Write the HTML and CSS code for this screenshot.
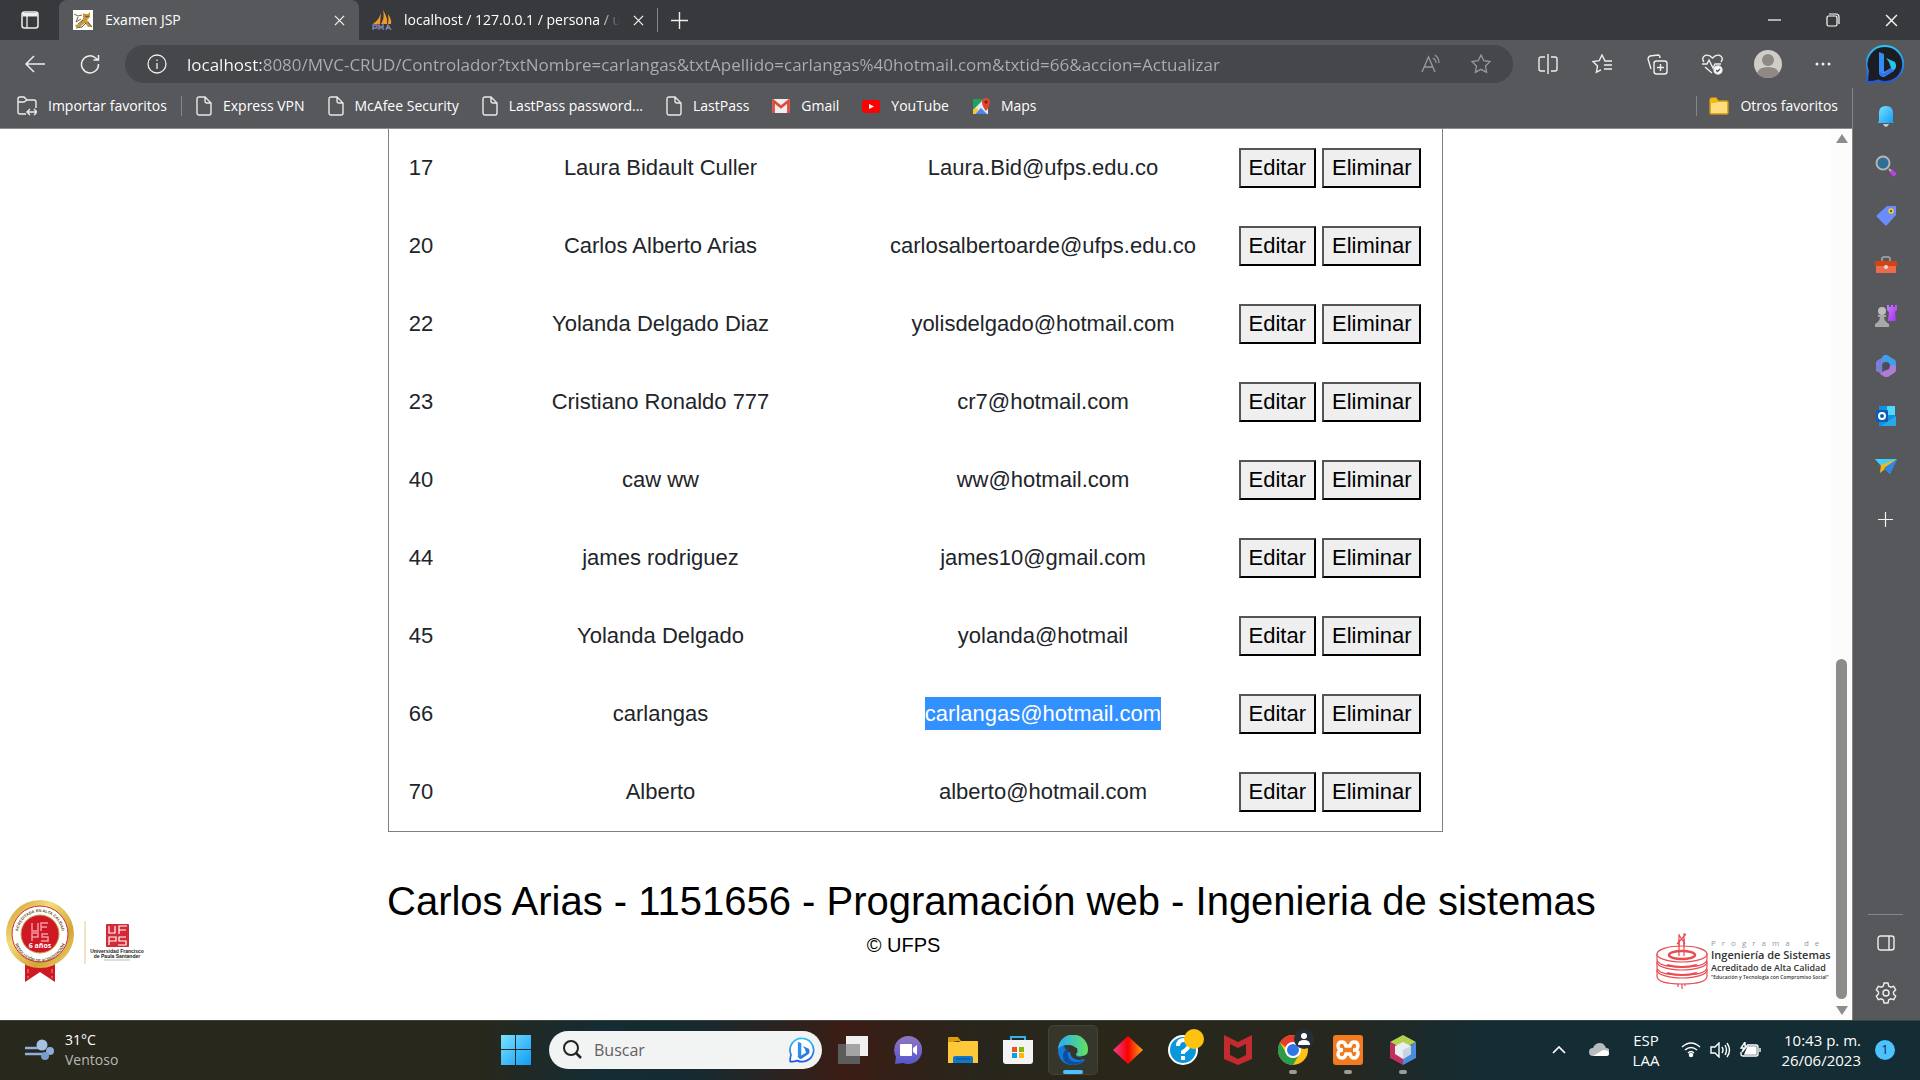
FILE: index.html
```html
<!DOCTYPE html>
<html lang="es">
<head>
<meta charset="utf-8">
<title>Examen JSP</title>
<link rel="stylesheet" href="styles.css">
</head>
<body>
<svg class="defs" aria-hidden="true">
  <defs>
    <linearGradient id="bing" x1="0" y1="0" x2="0" y2="1"><stop offset="0" stop-color="#2ac4f5"/><stop offset="1" stop-color="#2456e0"/></linearGradient>
    <linearGradient id="violet" x1="0" y1="0" x2="1" y2="1"><stop offset="0" stop-color="#c77dff"/><stop offset="1" stop-color="#a92cf0"/></linearGradient>
    <linearGradient id="gold" x1="0" y1="0" x2="1" y2="1"><stop offset="0" stop-color="#c8952a"/><stop offset=".35" stop-color="#f3dc7a"/><stop offset=".7" stop-color="#d3a536"/><stop offset="1" stop-color="#f0d878"/></linearGradient>
    <linearGradient id="sky" x1="0" y1="0" x2="1" y2="1"><stop offset="0" stop-color="#7be3ff"/><stop offset="1" stop-color="#0f9cf5"/></linearGradient>
    <symbol id="page" viewBox="0 0 16 20"><path d="M3 1h6l6 6v10a2 2 0 0 1-2 2H3a2 2 0 0 1-2-2V3a2 2 0 0 1 2-2zM9 1v4a2 2 0 0 0 2 2h4" fill="none" stroke="#e8e8e8" stroke-width="1.4"/></symbol>
    <symbol id="cross" viewBox="0 0 12 12"><path d="M1 1l10 10M11 1L1 11" stroke="#f0f0f0" stroke-width="1.4"/></symbol>
    <symbol id="plus" viewBox="0 0 16 16"><path d="M8 0v16M0 8h16" stroke="#f0f0f0" stroke-width="1.3"/></symbol>
  </defs>
</svg>

<header class="tabs">
  <button class="icon-btn tab-menu" aria-label="Menú de pestañas"><svg width="18" height="18" viewBox="0 0 18 18"><rect x="1" y="1" width="16" height="16" rx="2.5" fill="none" stroke="#eee" stroke-width="1.5"/><path d="M1.500 2h15v3.500h-15z" fill="#eee"/><path d="M6 5v12" stroke="#eee" stroke-width="1.300"/></svg></button>
  <div class="tab active">
    <svg width="20" height="20" viewBox="0 0 20 20"><rect width="20" height="20" fill="#fff"/><path d="M10 3l2 1h3l2-2v5l-3 3 3 4 2 3h-4l-3-4-5 4H3l-1-2 4-1 4-5z" fill="#c99a3c"/><path d="M1 4l4 2 4-1M5 7l-2 5 5-3M5 14l5-4M3 18l6-1 4-4M12 6l2 1 2-1M15 12l4 5" stroke="#4a3a1c" stroke-width=".8" fill="none"/></svg>
    <span class="tab-title">Examen JSP</span>
    <button class="icon-btn small" aria-label="Cerrar"><svg width="11" height="11"><use href="#cross"/></svg></button>
  </div>
  <div class="tab">
    <svg width="20" height="20" viewBox="0 0 20 20"><path d="M9 1q0 7-8 13h7zM11 0q5 8 4 14H9q4-6 2-14zM16 4q4 6 3 10h-3q1-5 0-10z" fill="#f59a23"/><path d="M1 20v-5h4v3H1M7 20v-5l2 3 2-3v5M14 20l2-5 3 5M14 18h4" stroke="#8583bb" stroke-width="1.300" fill="none"/></svg>
    <span class="tab-title faded">localhost / 127.0.0.1 / persona / u</span>
    <button class="icon-btn small" aria-label="Cerrar"><svg width="11" height="11"><use href="#cross"/></svg></button>
  </div>
  <span class="rule"></span>
  <button class="icon-btn new-tab" aria-label="Nueva pestaña"><svg width="17" height="17"><use href="#plus"/></svg></button>
  <div class="window-buttons">
    <button class="icon-btn" aria-label="Minimizar"><svg width="14" height="14"><path d="M0 7h13" stroke="#fff" stroke-width="1.200"/></svg></button>
    <button class="icon-btn" aria-label="Restaurar"><svg width="14" height="14" fill="none" stroke="#fff" stroke-width="1.200"><rect x="1" y="3" width="10" height="10" rx="1.500"/><path d="M3 1h7q3 0 3 3v7"/></svg></button>
    <button class="icon-btn" aria-label="Cerrar ventana"><svg width="13" height="13"><use href="#cross"/></svg></button>
  </div>
</header>

<div class="toolbar">
  <button class="icon-btn nav" aria-label="Atrás"><svg width="20" height="18" fill="none" stroke="#eee" stroke-width="1.500"><path d="M9 1L1 9l8 8M1 9h19"/></svg></button>
  <button class="icon-btn nav" aria-label="Actualizar"><svg width="20" height="20" fill="none" stroke="#eee" stroke-width="1.500"><path d="M18.500 10A8.500 8.500 0 1 1 15 3.500l3 2.500M18.500 1v5h-5"/></svg></button>
  <div class="address">
    <svg width="20" height="20" fill="none" stroke="#eee" stroke-width="1.300"><circle cx="10" cy="10" r="9"/><path d="M10 9v6M10 5.500v1.500"/></svg>
    <input class="url" type="text" aria-label="Dirección" value="localhost:8080/MVC-CRUD/Controlador?txtNombre=carlangas&amp;txtApellido=carlangas%40hotmail.com&amp;txtid=66&amp;accion=Actualizar">
    <button class="icon-btn" aria-label="Leer en voz alta"><svg width="22" height="20" fill="none" stroke="#98999c" stroke-width="1.300"><path d="M2 18L8.500 3 15 18M4.500 13h8M13 4q3 2 3 5M15 1q4 3 4 8"/></svg></button>
    <button class="icon-btn" aria-label="Agregar a favoritos"><svg width="20" height="20" fill="none" stroke="#98999c" stroke-width="1.300"><path d="M10 1l2.800 5.700 6.200.900-4.500 4.400 1.100 6.200L10 15.300l-5.600 2.900 1.100-6.200L1 7.600l6.200-.9z"/></svg></button>
  </div>
  <div class="actions">
    <button class="icon-btn" aria-label="Dividir pantalla"><svg width="20" height="20" fill="none" stroke="#eee" stroke-width="1.400"><path d="M7 3H3Q1 3 1 5v10q0 2 2 2h4M13 3h4q2 0 2 2v10q0 2-2 2h-4M10 0v20"/></svg></button>
    <button class="icon-btn" aria-label="Favoritos"><svg width="21" height="20" fill="none" stroke="#eee" stroke-width="1.400"><path d="M20 7h-7L10 1 7.200 6.700 1 7.600 5.500 12l-1.100 6.200L9 15.800M12 11h8M12 15h8"/></svg></button>
    <button class="icon-btn" aria-label="Colecciones"><svg width="21" height="21" fill="none" stroke="#eee" stroke-width="1.400"><path d="M4 15L1 5q0-2 2-3l8-1q2 0 2 3"/><rect x="7" y="7" width="13" height="13" rx="2.500"/><path d="M13.500 10v7M10 13.500h7"/></svg></button>
    <button class="icon-btn" aria-label="Rendimiento"><svg width="21" height="21" fill="none" stroke="#eee" stroke-width="1.400"><path d="M2 8Q-1 4 3 1.500 7 0 10.500 4 14 0 18 1.500q4 2.500 1 6.500M3 13l7 6M0 10h5l2-4 4 8 2-4h6"/><circle cx="16" cy="16" r="4" fill="#fff"/><path d="M14 16l1.500 1.500L18 15" stroke="#55565a"/></svg></button>
    <button class="icon-btn" aria-label="Perfil"><svg width="28" height="28"><circle cx="14" cy="14" r="14" fill="#d0cdc9"/><circle cx="14" cy="10" r="6" fill="#8e8984"/><path d="M3 23Q5 17 14 17t11 6q-4 5-11 5T3 23z" fill="#8e8984"/></svg></button>
    <button class="icon-btn" aria-label="Configuración y más"><svg width="18" height="4" fill="#eee"><circle cx="3" cy="2" r="1.500"/><circle cx="9" cy="2" r="1.500"/><circle cx="15" cy="2" r="1.500"/></svg></button>
    <button class="icon-btn" aria-label="Bing"><svg width="38" height="38" viewBox="0 0 38 38"><path d="M19 1a18 18 0 1 1-7 34.500q-5 2-10.500 1.500Q1 32 2 26A18 18 0 0 1 19 1z" fill="#1c1d22" stroke="url(#bing)" stroke-width="2"/><path d="M13 7l5 2v18l-3 4-2-3z" fill="#2f8df5"/><path d="M18 27l7-4-2-6-3-4 9 4q3 6-2 9l-9 6q-4 0-5-4z" fill="#25c3ee"/><path d="M15 31q-2-2-2-4l5 1 7-5 3 3-10 6z" fill="#3a6cf4"/></svg></button>
  </div>
</div>

<div class="middle">
  <div class="content">
    <nav class="favorites">
      <a href="#"><svg width="20" height="20" fill="none" stroke="#eee" stroke-width="1.400"><path d="M9 18H3q-2 0-2-2V3q0-2 2-2h4l3 3h7q2 0 2 2v6M1 6h6l3-2M11 16h8M13 13l-3 3 3 3M17 13l3 3-3 3"/></svg>Importar favoritos</a>
      <span class="rule"></span>
      <a href="#"><svg width="16" height="20"><use href="#page"/></svg>Express VPN</a>
      <a href="#"><svg width="16" height="20"><use href="#page"/></svg>McAfee Security</a>
      <a href="#"><svg width="16" height="20"><use href="#page"/></svg>LastPass password...</a>
      <a href="#"><svg width="16" height="20"><use href="#page"/></svg>LastPass</a>
      <a href="#"><svg width="18" height="14"><rect width="18" height="14" rx="1" fill="#eee"/><path d="M1.500 14V2L9 8l7.500-6v12" fill="none" stroke="#dd4b3e" stroke-width="2.800"/></svg>Gmail</a>
      <a href="#"><svg width="18" height="13"><rect width="18" height="13" rx="3" fill="#f00"/><path d="M7 4l5 2.500L7 9z" fill="#fff"/></svg>YouTube</a>
      <a href="#"><svg width="18" height="18"><path d="M1 2h15v15H1z" fill="#e8e8e8"/><path d="M1 2h11L1 13z" fill="#1fa15d"/><path d="M3 17l6-6 6 6z" fill="#4a86f0"/><path d="M1 13l3-2 3 2-4 4H1z" fill="#fbcb22"/><path d="M14 14q-4-5-4-9a4 4 0 0 1 8 0q0 4-4 9z" fill="#e0432f"/><circle cx="14" cy="5" r="1.500" fill="#7b1c14"/></svg>Maps</a>
      <span class="rule push"></span>
      <a href="#"><svg width="20" height="18"><path d="M1 3q0-2 2-2h4l2 3h9q1 0 1 1v11q0 1-1 1H2q-1 0-1-1z" fill="#ffdc7c" stroke="#c99511" stroke-width="1.400"/><path d="M1 5V2l6-1 2 3-2 2H1z" fill="#f2b90f"/></svg>Otros favoritos</a>
    </nav>

    <div class="viewport">
      <main class="document">
        <table class="people">
          <colgroup><col class="c-id"><col><col class="c-mail"><col class="c-actions"></colgroup>
          <tbody>
            <tr><td>17</td><td>Laura Bidault Culler</td><td>Laura.Bid@ufps.edu.co</td><td><div class="row-actions"><button>Editar</button><button>Eliminar</button></div></td></tr>
            <tr><td>20</td><td>Carlos Alberto Arias</td><td>carlosalbertoarde@ufps.edu.co</td><td><div class="row-actions"><button>Editar</button><button>Eliminar</button></div></td></tr>
            <tr><td>22</td><td>Yolanda Delgado Diaz</td><td>yolisdelgado@hotmail.com</td><td><div class="row-actions"><button>Editar</button><button>Eliminar</button></div></td></tr>
            <tr><td>23</td><td>Cristiano Ronaldo 777</td><td>cr7@hotmail.com</td><td><div class="row-actions"><button>Editar</button><button>Eliminar</button></div></td></tr>
            <tr><td>40</td><td>caw ww</td><td>ww@hotmail.com</td><td><div class="row-actions"><button>Editar</button><button>Eliminar</button></div></td></tr>
            <tr><td>44</td><td>james rodriguez</td><td>james10@gmail.com</td><td><div class="row-actions"><button>Editar</button><button>Eliminar</button></div></td></tr>
            <tr><td>45</td><td>Yolanda Delgado</td><td>yolanda@hotmail</td><td><div class="row-actions"><button>Editar</button><button>Eliminar</button></div></td></tr>
            <tr><td>66</td><td>carlangas</td><td><span class="selected">carlangas@hotmail.com</span></td><td><div class="row-actions"><button>Editar</button><button>Eliminar</button></div></td></tr>
            <tr><td>70</td><td>Alberto</td><td>alberto@hotmail.com</td><td><div class="row-actions"><button>Editar</button><button>Eliminar</button></div></td></tr>
          </tbody>
        </table>
        <footer class="credits">
          <svg class="seal" width="144" height="84" viewBox="0 0 144 84">
            <path d="M19 60h30v22l-15-10-15 10z" fill="#d01726"/><path d="M22 62v16M46 62v16" stroke="#e6a24a" stroke-dasharray="4 3"/>
            <circle cx="34" cy="34" r="34" fill="url(#gold)"/><circle cx="34" cy="34" r="28" fill="#fff" stroke="#d0303a"/>
            <circle cx="34" cy="34" r="19" fill="#d01726" stroke="#c9a048"/>
            <path id="arc-top" d="M12 34a22 22 0 0 1 44 0" fill="none"/><path id="arc-bottom" d="M9 43a26 26 0 0 0 50 0" fill="none"/>
            <text class="seal-ring"><textPath href="#arc-top" startOffset="50%">ACREDITADA EN ALTA CALIDAD</textPath></text>
            <text class="seal-ring low"><textPath href="#arc-bottom" startOffset="50%">RESOLUCIÓN DE ACREDITACIÓN</textPath></text>
            <path d="M26 23v8h6v-8M35 31v-8h7M35 27h6M26 41v-8h6v4h-6M42 34h-6v3h6v4h-7" fill="none" stroke="#f19aa0" stroke-width="1.500"/>
            <text class="seal-years" x="34" y="48">6 años</text>
            <path d="M79 21v43" stroke="#e2c98b"/>
            <rect x="100" y="24" width="23" height="23" rx="1" fill="#d32a38"/>
            <path d="M103 26v7h6v-7M113 34v-8h8M113 30h7M103 45v-8h7v4h-7M120 37h-7v4h7v4h-8" fill="none" stroke="#fff" stroke-width="1.200"/>
            <text class="seal-name" x="111" y="53">Universidad Francisco</text><text class="seal-name" x="111" y="58">de Paula Santander</text>
            <path d="M98 60h26" stroke="#bbb"/>
          </svg>
          <div class="author">
            <h1>Carlos Arias - 1151656 - Programación web - Ingenieria de sistemas</h1>
            <p>© UFPS</p>
          </div>
          <div class="program">
            <svg width="54" height="58" viewBox="0 0 54 58" fill="#fff" stroke="#e84b50" stroke-width="1.200"><path d="M27 50v7M23 50v5M30 50v4M24 2v14M29 1v14M22 12l9-10M24 3l6 9"/><path d="M2 38v6q0 8 25 8t25-8v-6z"/><ellipse cx="27" cy="38" rx="25" ry="8"/><path d="M2 30v5q0 8 25 8t25-8v-5z"/><ellipse cx="27" cy="30" rx="25" ry="8"/><path d="M2 22v5q0 8 25 8t25-8v-5z"/><ellipse cx="27" cy="22" rx="25" ry="8"/><ellipse cx="27" cy="23" rx="13" ry="4" stroke-width="2.500"/><path d="M24 8v16M29 7v17"/><path d="M12 33q15 4 30 0M12 41q15 4 30 0" stroke-width="2" fill="none"/></svg>
            <div class="program-text"><span class="p1">Programa de</span><span class="p2">Ingeniería de Sistemas</span><span class="p3">Acreditado de Alta Calidad</span><span class="p4">"Educación y Tecnología con Compromiso Social"</span></div>
          </div>
        </footer>
      </main>
      <div class="scrollbar"><svg width="12" height="9"><path d="M6 0l6 9H0z" fill="#8c8c8c"/></svg><div class="track"><div class="thumb"></div></div><svg width="12" height="9"><path d="M0 0h12L6 9z" fill="#8c8c8c"/></svg></div>
    </div>
  </div>

  <aside class="sidebar">
    <button class="icon-btn" aria-label="Notificaciones"><svg width="22" height="22"><path d="M4 16V8q0-7 7-7t7 7v8l1 2H3z" fill="url(#sky)"/><path d="M8 19h6q-1 3-3 3t-3-3z" fill="#c9c9c9"/></svg></button>
    <button class="icon-btn" aria-label="Buscar"><svg width="22" height="22"><path d="M14 14l6 6" stroke="#b9b9b9" stroke-width="2"/><path d="M16 16l4 4" stroke="#c33cf0" stroke-width="4"/><circle cx="8" cy="8" r="6.500" fill="#2e6f98" stroke="#b5b5b5" stroke-width="2"/></svg></button>
    <button class="icon-btn" aria-label="Compras"><svg width="22" height="22"><path d="M12 1h8q1 0 1 1v8l-9 10q-1 1-2 0l-8-8q-1-1 0-2z" fill="#6a8dfb"/><circle cx="16" cy="6" r="2.700" fill="#f7cb2b"/><circle cx="16" cy="6" r="1" fill="#333"/></svg></button>
    <button class="icon-btn" aria-label="Herramientas"><svg width="22" height="22"><path d="M7 6V4q0-2 2-2h4q2 0 2 2v2" fill="none" stroke="#aaa" stroke-width="1.500"/><rect x="1" y="10" width="20" height="8" rx="1" fill="#ed6b4b"/><rect y="6" width="22" height="5" rx="1" fill="#d04317"/><circle cx="11" cy="12" r="2" fill="#ddd"/></svg></button>
    <button class="icon-btn" aria-label="Juegos"><svg width="22" height="22"><path d="M12 0h2v2h2V0h2v2h2V0h2v5l-2 2 1 9h-8l1-9-2-2z" fill="url(#violet)"/><circle cx="7" cy="6" r="4" fill="#bcbcbc"/><path d="M3 10h8v2H9q0 4 5 7v3H0v-3q5-3 5-7H3z" fill="#a8a8a8"/></svg></button>
    <button class="icon-btn" aria-label="Microsoft 365"><svg width="22" height="22"><path d="M12 0L3 5Q1 6 1 8v8l6 3V9l2-2 6-3z" fill="#7b7fdc"/><path d="M9 0h3l8 5q1 1 1 3v6l-6-4-2-2-2-1-4-1q-1-4 2-6z" fill="#3f9fea"/><path d="M21 11v4q0 2-2 3l-6 4h-3l-5-3 2-2 7-3 1-4z" fill="#b07bd6"/><path d="M9 8l4-1 2 3-1 4-4 1-2-3z" fill="#4b4d5c"/></svg></button>
    <button class="icon-btn" aria-label="Outlook"><svg width="22" height="22"><path d="M4 1h16v20H4z" fill="#1490df"/><path d="M12 1h8v9h-8z" fill="#50d9ff"/><path d="M21 11v10H6z" fill="#28a8ea"/><rect x="1" y="5" width="12" height="12" rx="1" fill="#0a5fb4"/><circle cx="7" cy="11" r="3" fill="none" stroke="#fff" stroke-width="2"/></svg></button>
    <button class="icon-btn" aria-label="Drop"><svg width="22" height="22"><path d="M0 4h22l-7 15-5-5z" fill="#3aa5f2"/><path d="M0 4h22L6 11z" fill="#43cdf8"/><path d="M22 4L6 10l-1 8 5-4z" fill="#f6b911"/><path d="M22 4L9 13l6 6z" fill="#2f87e8"/></svg></button>
    <button class="icon-btn add" aria-label="Agregar"><svg width="15" height="15"><use href="#plus"/></svg></button>
    <span class="side-rule"></span>
    <button class="icon-btn" aria-label="Ocultar panel"><svg width="18" height="16" fill="none" stroke="#eee" stroke-width="1.400"><rect x="1" y="1" width="16" height="14" rx="2.500"/><path d="M12 1v14"/></svg></button>
    <button class="icon-btn" aria-label="Configuración"><svg width="22" height="22" viewBox="0 0 22 22" fill="none" stroke="#eee" stroke-width="1.400"><circle cx="11" cy="11" r="3"/><path d="M9 1h4l.7 3 2 1.200L18.700 4.300l2 3.500L18.500 10v2l2.200 2.200-2 3.500-3-.9-2 1.200L13 21H9l-.7-3-2-1.200-3 .9-2-3.500L3.500 12v-2L1.300 7.800l2-3.500 3 .9 2-1.200z"/></svg></button>
  </aside>
</div>

<footer class="taskbar">
  <button class="weather"><svg width="30" height="22"><path d="M0 9h14M0 15h18" stroke="#8fb0dc" stroke-width="2.500"/><circle cx="17" cy="6" r="5.500" fill="#a6c1e4"/><circle cx="25" cy="12" r="4" fill="#8eaeda"/><circle cx="20" cy="17" r="4" fill="#7a9ccb"/></svg><span class="two-lines"><span>31°C</span><span class="dim">Ventoso</span></span></button>
  <div class="apps">
    <button class="icon-btn start" aria-label="Inicio"><svg width="30" height="30" fill="url(#sky)"><path d="M0 0h14v14H0zM15 0h15v14H15zM0 15h14v15H0zM15 15h15v15H15z"/></svg></button>
    <label class="search"><svg width="20" height="20" fill="none" stroke="#222" stroke-width="2"><circle cx="9" cy="8" r="7"/><path d="M14 13l5 5" stroke-width="2.500"/></svg><input type="text" placeholder="Buscar" aria-label="Buscar en Windows"><svg width="26" height="26" viewBox="0 0 38 38"><path d="M19 2a17 17 0 1 1-7 32.500q-5 2-10 1.500Q1 32 3 26A17 17 0 0 1 19 2z" fill="#fff" stroke="url(#bing)" stroke-width="2.500"/><path d="M13 7l5 2v18l-3 4-2-3z" fill="#2f8df5"/><path d="M18 27l7-4-2-6-3-4 9 4q3 6-2 9l-9 6q-4 0-5-4z" fill="#2b7be6"/></svg></label>
    <button class="app" aria-label="Vista de tareas"><svg width="30" height="28"><rect y="8" width="22" height="20" fill="#5c5c5c"/><rect x="8" width="22" height="20" fill="#f0f0f0"/><rect x="8" y="8" width="14" height="12" fill="#a4a4a4"/></svg></button>
    <button class="app" aria-label="Chat"><svg width="28" height="28"><defs><linearGradient id="chat" x1="0" y1="0" x2="0" y2="1"><stop offset="0" stop-color="#9176c0"/><stop offset="1" stop-color="#5557cc"/></linearGradient></defs><path d="M14 0a14 14 0 1 1-5 27l-8 1 1-7A14 14 0 0 1 14 0z" fill="url(#chat)"/><rect x="6" y="8" width="12" height="12" rx="1" fill="#fff"/><path d="M19 12l4-3v10l-4-3z" fill="#fff"/></svg></button>
    <button class="app" aria-label="Explorador"><svg width="30" height="26"><path d="M0 1q0-1 1-1h9l3 4h-3L0 6z" fill="#dd9c0b"/><path d="M0 5h10l3-1h16q1 0 1 1v21H0z" fill="#fdc939"/><path d="M5 26v-5q0-2 2-2h16q2 0 2 2v5z" fill="#1077c9"/><path d="M8 22h14" stroke="#0a4d8c"/></svg></button>
    <button class="app" aria-label="Store"><svg width="30" height="30"><path d="M8 6V2h14v4" fill="none" stroke="#2fb4e9" stroke-width="2"/><path d="M0 5h30v21q0 3-3 3H3q-3 0-3-3z" fill="#f3f3f3"/><path d="M9 12h5v5H9z" fill="#f05022"/><path d="M16 12h5v5h-5z" fill="#7fb900"/><path d="M9 18h5v5H9z" fill="#00a3ee"/><path d="M16 18h5v5h-5z" fill="#ffb800"/></svg></button>
    <button class="app current" aria-label="Edge"><svg width="30" height="30"><defs><linearGradient id="wave"><stop offset=".2" stop-color="#31b5e0"/><stop offset="1" stop-color="#62e35a"/></linearGradient></defs><path d="M0 14q0 8 4 12t11 4q8 0 12-5l-9-8H9L5 9q-5 2-5 5z" fill="#1279d6"/><path d="M0 14A15 15 0 0 1 30 15q0 6-7 6-5 0-5-2 2-1 1-4-2-5-9-5T0 14z" fill="url(#wave)"/><path d="M10 15q-2 12 9 12 5 0 8-4-4 7-12 7-10-1-10-9 0-5 5-8z" fill="#0e4c9c"/><path d="M19 13q-7-2-7 4 1 8 10 8 3 0 6-3-3 1-7 0-4-1-3-3 2-2 1-6z" fill="#37362a"/></svg></button>
    <button class="app" aria-label="Rombo"><svg width="30" height="30"><defs><linearGradient id="rhomb"><stop offset="0" stop-color="#f0409a"/><stop offset=".5" stop-color="#f80000"/><stop offset="1" stop-color="#fba41c"/></linearGradient></defs><path d="M15 1l15 14-15 14L0 15z" fill="url(#rhomb)"/></svg></button>
    <button class="app badged" aria-label="Ayuda"><svg width="36" height="36"><circle cx="15" cy="21" r="14" fill="#0b97dc" stroke="#fff" stroke-width="2"/><path d="M10 17q0-6 6-6 5 0 5 5 0 3-6 7v2M15 27v4" fill="none" stroke="#fff" stroke-width="4"/><circle cx="26" cy="10" r="10" fill="#ffc20e"/></svg></button>
    <button class="app" aria-label="McAfee"><svg width="28" height="30"><path d="M0 0l14 7L28 0v24l-14 6-14-6zM6 9v11l8 4 8-4V9l-8 4z" fill="#c32b2f" fill-rule="evenodd"/></svg></button>
    <button class="app badged running" aria-label="Chrome"><svg width="36" height="36"><circle cx="15" cy="21" r="15" fill="#fbc116"/><path d="M2 13.500a15 15 0 0 1 26 0H15a7.500 7.500 0 0 0-7 5z" fill="#e33b2e"/><path d="M2 13.500A15 15 0 0 0 15 36l6.500-11A7.500 7.500 0 0 1 8.500 25z" fill="#2a9d4a"/><circle cx="15" cy="21" r="7" fill="#2f74e8" stroke="#fff" stroke-width="2"/><circle cx="26" cy="10" r="10" fill="#233038"/><circle cx="26" cy="7" r="3" fill="#fff"/><path d="M20 16q0-5 6-5t6 5z" fill="#fff"/></svg></button>
    <button class="app running" aria-label="XAMPP"><svg width="30" height="30"><rect width="30" height="30" rx="3" fill="#f47a20"/><path d="M9 7q-4 0-4 4t5 4q-5 0-5 4t4 4q3 0 4-4h4q1 4 4 4t4-4-5-4q5 0 5-4t-4-4q-3 0-4 4h-4q-1-4-4-4z" fill="none" stroke="#fff" stroke-width="3.400"/></svg></button>
    <button class="app running" aria-label="NetBeans"><svg width="26" height="30"><path d="M13 0l13 7-13 7L0 7z" fill="#b5cf51"/><path d="M0 7l13 8v15L0 23z" fill="#c0305c"/><path d="M26 7l-13 8v15l13-7z" fill="#4a8ddc"/><path d="M13 7l8 4v8l-8 5-8-5v-8z" fill="#e9eef2"/><path d="M13 15l8-4v8l-8 5z" fill="#c9d4e0"/></svg></button>
  </div>
  <div class="tray">
    <button class="icon-btn" aria-label="Iconos ocultos"><svg width="14" height="8"><path d="M1 7l6-6 6 6" fill="none" stroke="#fff" stroke-width="1.700"/></svg></button>
    <button class="icon-btn" aria-label="OneDrive"><svg width="20" height="14"><path d="M4 13a4 4 0 0 1 0-8q2-5 7-5 4 0 6 5a4 4 0 0 1 0 8z" fill="#b9bcbe"/><path d="M4 13l10-6q6 0 6 3t-3 3z" fill="#fff"/></svg></button>
    <button class="lang"><span>ESP</span><span>LAA</span></button>
    <button class="status" aria-label="Red, volumen y batería">
      <svg width="20" height="16" fill="none" stroke="#fff" stroke-width="1.500"><path d="M1 5q9-8 18 0M4 8q6-5 12 0M7 11q3-3 6 0"/><circle cx="10" cy="13" r="1.500" fill="#fff"/></svg>
      <svg width="21" height="16" fill="none" stroke="#fff" stroke-width="1.400"><path d="M1 5h4l4-4v14l-4-4H1zM12 5q2 3 0 6M15 3q3 5 0 10M17 1q5 7 0 14"/></svg>
      <svg width="21" height="16" fill="none" stroke="#fff" stroke-width="1.400"><path d="M7 3h9q2 0 2 2v7q0 2-2 2H3q-2 0-2-2v-2"/><path d="M8 5h8v7H5z" fill="#fff"/><path d="M20 6v4M5 0L1 6h3L2 10l5-6H5z"/></svg>
    </button>
    <button class="clock"><span>10:43 p. m.</span><span>26/06/2023</span></button>
    <span class="count">1</span>
  </div>
</footer>
</body>
</html>
```
FILE: styles.css
```css
* { box-sizing: border-box; }
body { margin: 0; height: 100vh; display: flex; flex-direction: column; overflow: hidden; background: #57585c; color: #fff; font: 14px/20px "Open Sans", "Noto Sans", sans-serif; }
svg { flex: none; display: block; }
.defs { position: absolute; width: 0; height: 0; }
button { font: inherit; color: inherit; background: none; border: 0; padding: 0; }
input { font: inherit; border: 0; background: none; outline: 0; min-width: 0; padding: 0; }
a { color: inherit; text-decoration: none; }
.icon-btn { display: flex; align-items: center; justify-content: center; flex: none; }
.rule { width: 1px; height: 24px; background: #85868a; flex: none; }

.tabs { display: flex; align-items: center; height: 40px; flex: none; background: #38393c; }
.tab-menu { width: 59px; height: 40px; }
.tab { display: flex; align-items: center; gap: 12px; height: 40px; width: 298px; padding: 0 13px; }
.tab.active { background: #57585c; border-radius: 8px 8px 0 0; width: 300px; padding: 0 14px; }
.tab-title { flex: 1; min-width: 0; white-space: nowrap; overflow: hidden; }
.faded { -webkit-mask-image: linear-gradient(90deg, #000 90%, transparent); mask-image: linear-gradient(90deg, #000 90%, transparent); }
.small { width: 12px; }
.new-tab { width: 43px; height: 40px; }
.window-buttons { display: flex; margin-left: auto; }
.window-buttons button { width: 58px; height: 40px; }

.toolbar { display: flex; align-items: center; height: 48px; flex: none; padding-left: 7px; }
.nav { width: 55px; }
.address { display: flex; align-items: center; flex: 1; height: 38px; margin-left: 8px; padding: 0 7px 0 22px; border-radius: 19px; background: #46474a; }
.address .icon-btn { width: 50px; }
.url { flex: 1; margin-left: 20px; font-size: 17px; height: 30px; color: transparent; background: linear-gradient(90deg, #fff 75px, #adaeb1 75px); -webkit-background-clip: text; background-clip: text; }
.actions { display: flex; align-items: center; margin-left: 7px; }
.actions .icon-btn { width: 55px; }
.actions .icon-btn:last-child { width: 70px; }

.middle { flex: 1; min-height: 0; display: flex; }
.content { flex: 1; min-width: 0; display: flex; flex-direction: column; }
.favorites { display: flex; align-items: center; gap: 23px; height: 41px; flex: none; padding: 0 14px 4px 17px; border-bottom: 1px solid #8c8d90; white-space: nowrap; }
.favorites a { display: flex; align-items: center; gap: 11px; }
.favorites .rule { margin: 0 -9px; height: 20px; }
.favorites .rule.push { margin: 0 -11px 0 auto; }
.viewport { flex: 1; min-height: 0; display: flex; background: #fff; color: #000; font-family: "Liberation Sans", Arial, sans-serif; }
.document { flex: 1; min-width: 0; overflow: hidden; }
.people { width: 1055px; max-width: 100%; margin: 0 auto; table-layout: fixed; border-collapse: separate; border-spacing: 0; border: 1px solid #808080; border-top: 0; color: #212529; font-size: 22px; line-height: 26px; text-align: center; }
.c-id { width: 64px; }
.c-mail { width: 350px; }
.c-actions { width: 224px; }
.people td { height: 78px; padding: 0; }
.row-actions { display: flex; justify-content: center; gap: 6px; }
.row-actions button { height: 40px; padding: 0 8px; color: #000; background: #efefef; border: 2px solid; border-color: #555 #000 #000 #555; }
.selected { padding: 4px 0; color: #fff; background: #3390ff; }

.credits { display: grid; grid-template-columns: 1fr 1057px 1fr; padding-top: 43px; }
.seal { margin: 25px 0 0 6px; }
.author h1 { margin: 0; font-size: 40px; line-height: 52px; font-weight: 400; white-space: nowrap; }
.author p { margin: 6px 24px 0 0; font-size: 20px; line-height: 24px; text-align: center; }
.seal-ring { font: bold 4px "Liberation Sans", sans-serif; fill: #6b4a20; text-anchor: middle; }
.seal-years { font: bold 7px "Open Sans", sans-serif; fill: #fff; text-anchor: middle; }
.seal-name { font: bold 5px "Liberation Sans", sans-serif; fill: #222; text-anchor: middle; }
.program { display: flex; gap: 2px; justify-self: end; margin: 57px 2px 0 0; }
.program-text { display: flex; flex-direction: column; padding-top: 6px; color: #333; font-family: "Open Sans", sans-serif; font-weight: 600; white-space: nowrap; width: 118px; }
.p1 { font-size: 8px; line-height: 10px; letter-spacing: 6px; font-weight: 400; color: #999; }
.p2 { font-size: 11px; line-height: 14px; }
.p3 { font-size: 9px; line-height: 12px; }
.p4 { font-size: 5px; line-height: 7px; }
.scrollbar { width: 21px; flex: none; display: flex; flex-direction: column; align-items: center; padding: 5px 0; background: #fcfcfc; }
.track { flex: 1; display: flex; align-items: flex-end; padding: 7px 0; }
.thumb { width: 11px; height: 40%; border-radius: 6px; background: #8c8c8c; }

.sidebar { width: 68px; flex: none; display: flex; flex-direction: column; align-items: center; gap: 28px; padding: 17px 2px 16px 0; border-left: 1px solid #85868a; }
.sidebar .icon-btn { height: 22px; }
.sidebar .add { margin-top: 3px; }
.side-rule { width: 35px; height: 1px; background: #85868a; margin: auto 0 -11px; }

.taskbar { display: flex; align-items: center; height: 60px; flex: none; padding: 0 25px 2px; font-size: 14px; border-top: 1px solid #3c4440; background: linear-gradient(90deg, #28281c 0 25%, #142c33 31%, #152b31 36%, #3b1d15 44%, #28261c 51%, #2a2719 58%, #26271f 70%, #142c33 77%); }
.weather { display: flex; align-items: center; gap: 10px; text-align: left; width: 200px; }
.two-lines, .lang, .clock { display: flex; flex-direction: column; line-height: 20px; white-space: nowrap; }
.dim { color: #b8b8b4; }
.apps { flex: 1; display: flex; align-items: center; padding-left: 276px; }
.start { width: 30px; margin-right: 18px; }
.search { display: flex; align-items: center; width: 273px; height: 38px; padding: 0 7px 0 13px; border-radius: 19px; background: #f2f3f3; margin-right: 6px; }
.search input { flex: 1; margin-left: 12px; font-size: 16px; }
.search input::placeholder { color: #60615f; opacity: 1; }
.app { width: 50px; height: 50px; margin-right: 5px; flex: none; display: grid; place-items: center; border-radius: 5px; position: relative; }
.badged { padding: 0 0 6px 6px; }
.current { background: #37362a; border: 1px solid #434236; }
.current::after, .running::after { content: ""; position: absolute; left: 21px; bottom: 1px; width: 8px; height: 4px; border-radius: 2px; background: #9b9b97; }
.current::after { left: 14px; bottom: 0; width: 20px; background: #4cc2ff; }
.tray { display: flex; align-items: center; font-size: 15px; }
.tray .icon-btn { margin-right: 23px; }
.lang { text-align: center; margin: 0 22px 0 1px; }
.status { display: flex; gap: 9px; margin-right: 20px; }
.clock { text-align: right; }
.count { width: 20px; height: 20px; margin-left: 14px; border-radius: 10px; background: #4cc2ff; color: #123; text-align: center; font-size: 12px; }
```
